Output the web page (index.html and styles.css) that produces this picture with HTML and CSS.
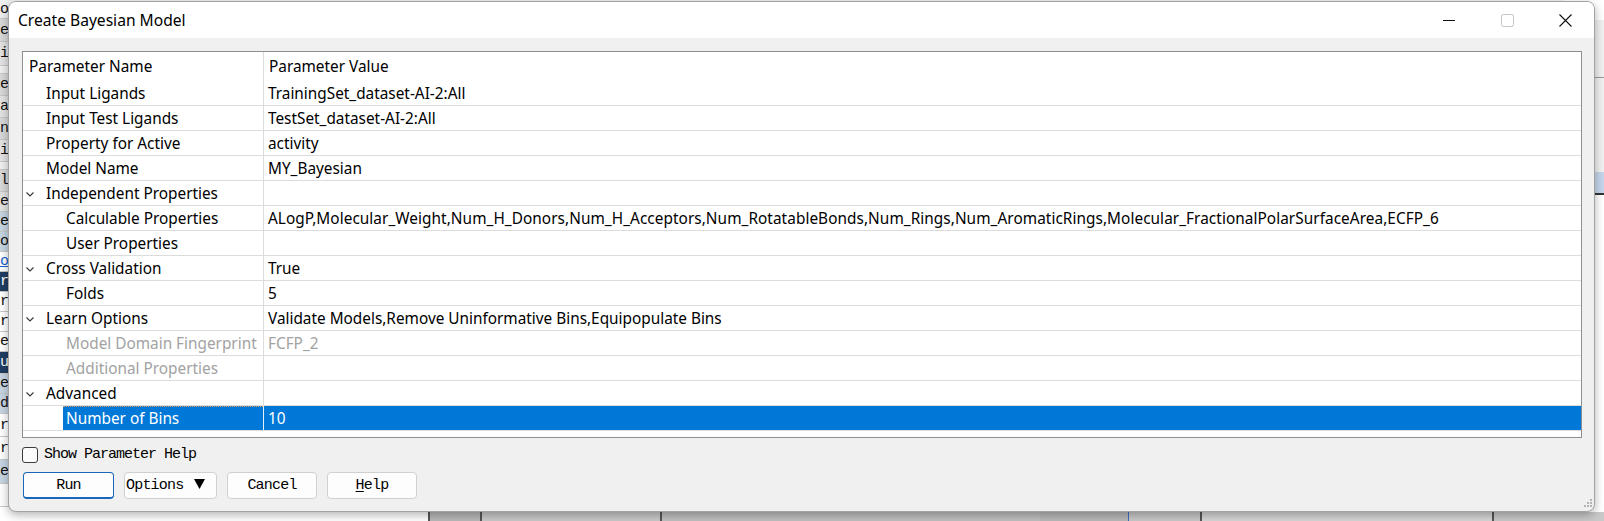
FILE: index.html
```html
<!DOCTYPE html>
<html>
<head>
<meta charset="utf-8">
<title>Create Bayesian Model</title>
<link rel="stylesheet" href="styles.css">
</head>
<body>
<div class="desktop">
  <div class="bg-app">
    <div class="bg-left">
      <div class="bl h19 c-lt">o</div>
      <div class="bl h23 c-g1">et</div>
      <div class="bl h24 c-g2">il</div>
      <div class="bl h8 c-lt"></div>
      <div class="bl h22 c-g1">ep</div>
      <div class="bl h22 c-g2">ar</div>
      <div class="bl h22 c-g1">ni</div>
      <div class="bl h22 c-g2">ig</div>
      <div class="bl h8 c-lt"></div>
      <div class="bl h22 c-g1">lo</div>
      <div class="bl h20 c-g2">ea</div>
      <div class="bl h20 c-lb">e</div>
      <div class="bl h20 c-lb">o</div>
      <div class="bl h20 c-wh link">o</div>
      <div class="bl h20 c-nv">re</div>
      <div class="bl h20 c-wh">r</div>
      <div class="bl h20 c-wh">r</div>
      <div class="bl h20 c-wh">e</div>
      <div class="bl h22 c-nv">ui</div>
      <div class="bl h20 c-lb">e</div>
      <div class="bl h20 c-lb">d</div>
      <div class="bl h23 c-wh">r</div>
      <div class="bl h23 c-wh">r</div>
      <div class="bl h24 c-lb">e</div>
      <div class="bl h23 c-wh"></div>
    </div>
    <div class="bg-mid"></div>
    <div class="bg-right">
      <div class="br h20 c-wh"></div>
      <div class="br h57 c-lt"><span class="br-badge">a</span></div>
      <div class="br h95 c-lt line-top"></div>
      <div class="br h21 c-lb2 br-tab">ys</div>
      <div class="br h40 c-wh line-top2 br-txt">or<br>C</div>
      <div class="br rest c-wh"></div>
    </div>
    <div class="bg-bottom">
      <div class="bb w428 c-wh"></div>
      <div class="bb w52 c-g3 edge-l"></div>
      <div class="bb w180 c-g4 edge-l"></div>
      <div class="bb w380 c-g5 edge-l"></div>
      <div class="bb w88 c-g3"></div>
      <div class="bb w72 c-g4 edge-b"></div>
      <div class="bb w292 c-g6 edge-l"></div>
      <div class="bb grow c-g4 edge-l"></div>
    </div>
  </div>

  <div class="dialog">
    <div class="titlebar">
      <span class="title">Create Bayesian Model</span>
      <div class="caption">
        <span class="cap-btn"><svg width="12" height="12" viewBox="0 0 12 12"><path d="M0 6.5H12" stroke="#111" stroke-width="1"/></svg></span>
        <span class="cap-btn"><svg width="13" height="13" viewBox="0 0 13 13"><rect x="0.5" y="0.5" width="12" height="12" rx="2" fill="none" stroke="#c4c4c4" stroke-width="1"/></svg></span>
        <span class="cap-btn"><svg width="13" height="13" viewBox="0 0 13 13"><path d="M0.5 0.5L12.5 12.5M12.5 0.5L0.5 12.5" stroke="#111" stroke-width="1.1"/></svg></span>
      </div>
    </div>

    <div class="body">
      <div class="grid">
        <div class="row head">
          <div class="name l0">Parameter Name</div>
          <div class="value hv">Parameter Value</div>
        </div>
        <div class="row">
          <div class="name l1">Input Ligands</div>
          <div class="value">TrainingSet_dataset-AI-2:All</div>
        </div>
        <div class="row">
          <div class="name l1">Input Test Ligands</div>
          <div class="value">TestSet_dataset-AI-2:All</div>
        </div>
        <div class="row">
          <div class="name l1">Property for Active</div>
          <div class="value">activity</div>
        </div>
        <div class="row">
          <div class="name l1">Model Name</div>
          <div class="value">MY_Bayesian</div>
        </div>
        <div class="row">
          <div class="name exp"><svg class="chev" width="8" height="5" viewBox="0 0 8 5"><path d="M0.5 0.5L4 4L7.5 0.5" fill="none" stroke="#3a3a3a" stroke-width="1.2"/></svg>Independent Properties</div>
          <div class="value"></div>
        </div>
        <div class="row">
          <div class="name l2">Calculable Properties</div>
          <div class="value long">ALogP,Molecular_Weight,Num_H_Donors,Num_H_Acceptors,Num_RotatableBonds,Num_Rings,Num_AromaticRings,Molecular_FractionalPolarSurfaceArea,ECFP_6</div>
        </div>
        <div class="row">
          <div class="name l2">User Properties</div>
          <div class="value"></div>
        </div>
        <div class="row">
          <div class="name exp"><svg class="chev" width="8" height="5" viewBox="0 0 8 5"><path d="M0.5 0.5L4 4L7.5 0.5" fill="none" stroke="#3a3a3a" stroke-width="1.2"/></svg>Cross Validation</div>
          <div class="value">True</div>
        </div>
        <div class="row">
          <div class="name l2">Folds</div>
          <div class="value">5</div>
        </div>
        <div class="row">
          <div class="name exp"><svg class="chev" width="8" height="5" viewBox="0 0 8 5"><path d="M0.5 0.5L4 4L7.5 0.5" fill="none" stroke="#3a3a3a" stroke-width="1.2"/></svg>Learn Options</div>
          <div class="value">Validate Models,Remove Uninformative Bins,Equipopulate Bins</div>
        </div>
        <div class="row dis">
          <div class="name l2">Model Domain Fingerprint</div>
          <div class="value">FCFP_2</div>
        </div>
        <div class="row dis">
          <div class="name l2">Additional Properties</div>
          <div class="value"></div>
        </div>
        <div class="row">
          <div class="name exp"><svg class="chev" width="8" height="5" viewBox="0 0 8 5"><path d="M0.5 0.5L4 4L7.5 0.5" fill="none" stroke="#3a3a3a" stroke-width="1.2"/></svg>Advanced</div>
          <div class="value"></div>
        </div>
        <div class="row selected">
          <div class="name"><span class="sel">Number of Bins</span></div>
          <div class="value">10</div>
        </div>
      </div>

      <label class="help-check"><span class="box"></span>Show Parameter Help</label>

      <div class="buttons">
        <span class="btn run">Run</span>
        <span class="btn opts">Options<svg class="tri" width="11" height="10" viewBox="0 0 11 10"><path d="M0 0H11L5.5 10Z" fill="#000"/></svg></span>
        <span class="btn cancel">Cancel</span>
        <span class="btn help"><u>H</u>elp</span>
      </div>
    </div>

    <svg class="grip" width="12" height="12" viewBox="0 0 12 12">
      <rect x="9" y="1" width="2" height="2" fill="#b4b4b4"/>
      <rect x="6" y="4" width="2" height="2" fill="#b4b4b4"/>
      <rect x="9" y="4" width="2" height="2" fill="#b4b4b4"/>
      <rect x="3" y="7" width="2" height="2" fill="#b4b4b4"/>
      <rect x="6" y="7" width="2" height="2" fill="#b4b4b4"/>
      <rect x="9" y="7" width="2" height="2" fill="#b4b4b4"/>
    </svg>
  </div>
</div>
</body>
</html>
```

FILE: styles.css
```css
html, body {
  margin: 0;
  padding: 0;
}
body {
  width: 1604px;
  height: 521px;
  overflow: hidden;
  background: #ffffff;
  font-family: "Noto Sans", "Open Sans", sans-serif;
}
.desktop {
  position: relative;
  width: 1604px;
  height: 521px;
  overflow: hidden;
}

/* ---------- background application ---------- */
.bg-app {
  display: grid;
  grid-template-columns: 60px 1fr 40px;
  grid-template-rows: 512px 9px;
  width: 1604px;
  height: 521px;
}
.bg-left {
  display: flex;
  flex-direction: column;
  font-family: "Liberation Mono", monospace;
  font-size: 15px;
  letter-spacing: -1px;
  color: #111;
  overflow: hidden;
}
.bl {
  display: flex;
  align-items: center;
  box-sizing: border-box;
  border-bottom: 1px solid #c8c8c8;
  white-space: nowrap;
}
.bg-mid { background: #f0f0f0; }
.bg-right {
  display: flex;
  flex-direction: column;
  overflow: hidden;
  font-family: "Liberation Sans", sans-serif;
  font-size: 14px;
}
.br { box-sizing: border-box; }
.br-badge {
  display: inline-block;
  margin: 24px 0 0 1px;
  background: #1a6fc0;
  color: #fff;
  font-weight: bold;
  padding: 0 2px;
  line-height: 14px;
}
.br-tab { color: #1f4f8f; font-weight: bold; font-size: 13px; font-style: italic; padding-top: 3px; }
.br-txt { line-height: 14px; padding-top: 3px; color: #111; }
.line-top { border-top: 1px solid #9a9a9a; }
.line-top2 { border-top: 2px solid #333; }
.rest { flex: 1; }

.h8 { height: 8px; }
.h19 { height: 19px; }
.h20 { height: 20px; }
.h21 { height: 21px; }
.h22 { height: 22px; }
.h23 { height: 23px; }
.h24 { height: 24px; }
.h40 { height: 40px; }
.h57 { height: 57px; }
.h95 { height: 95px; }

.c-lt { background: #f0f0f0; }
.c-g1 { background: #d9d9d9; }
.c-g2 { background: #e3e3e3; }
.c-g3 { background: #b9b9b9; }
.c-g4 { background: #c9c9c9; }
.c-g5 { background: #bfbfbf; }
.c-g6 { background: #d6d6d6; }
.c-lb { background: #c7d6e4; }
.c-lb2 { background: #c4d5ea; }
.c-nv { background: #203d63; color: #fff; }
.c-wh { background: #ffffff; }
.link { color: #1a5fd0; text-decoration: underline; }

.bg-bottom {
  grid-column: 1 / 4;
  display: flex;
  overflow: hidden;
}
.bb { box-sizing: border-box; }
.w428 { width: 428px; }
.w52 { width: 52px; }
.w180 { width: 180px; }
.w380 { width: 380px; }
.w88 { width: 88px; }
.w72 { width: 72px; }
.w292 { width: 292px; }
.grow { flex: 1; }
.edge-l { border-left: 2px solid #555; }
.edge-b { border-left: 1px solid #3a6fc0; }

/* ---------- dialog window ---------- */
.dialog {
  position: absolute;
  left: 8px;
  top: 1px;
  width: 1587px;
  height: 511px;
  box-sizing: border-box;
  border: 1px solid #a3a3a3;
  border-radius: 8px;
  background: #f0f0f0;
  overflow: hidden;
  display: flex;
  flex-direction: column;
  box-shadow: 0 3px 10px rgba(0, 0, 0, 0.3);
  color: #000;
}
.titlebar {
  height: 36px;
  flex: none;
  display: flex;
  align-items: center;
  background: #ffffff;
}
.title {
  flex: 1;
  padding-left: 9px;
  font-size: 15.6px;
  line-height: 36px;
}
.caption {
  display: flex;
  height: 36px;
}
.cap-btn {
  width: 58px;
  height: 36px;
  display: flex;
  align-items: center;
  justify-content: center;
}

.body {
  flex: 1;
  display: flex;
  flex-direction: column;
  padding: 13px 12px 0 13px;
}

/* ---------- property grid ---------- */
.grid {
  height: 387px;
  box-sizing: border-box;
  border: 1px solid #8d8f94;
  background: #ffffff;
  font-size: 15.35px;
  overflow: hidden;
}
.row {
  display: flex;
  height: 25px;
  box-sizing: border-box;
  border-bottom: 1px solid #dcdcdc;
  line-height: 24px;
  white-space: nowrap;
}
.row.head {
  height: 29px;
  line-height: 29px;
  border-bottom: none;
}
.name {
  width: 241px;
  flex: none;
  box-sizing: border-box;
  border-right: 1px solid #dcdcdc;
  display: flex;
  align-items: center;
  overflow: hidden;
}
.value {
  flex: 1;
  padding-left: 4px;
  overflow: hidden;
}
.value.long { letter-spacing: 0.06px; }
.value.hv { padding-left: 5px; }
.l0 { padding-left: 6px; }
.l1 { padding-left: 23px; }
.l2 { padding-left: 43px; }
.exp { padding-left: 3px; }
.chev {
  flex: none;
  margin-right: 12px;
  margin-top: 2px;
}
.dis { color: #a2a2a2; }

.selected .name { border-right-color: #e6eef8; }
.sel {
  position: relative;
  align-self: stretch;
  flex: 1;
  margin-left: 40px;
  padding-left: 3px;
  background: #0078d7;
  color: #ffffff;
}
.sel::before {
  content: "";
  position: absolute;
  left: 0;
  right: 0;
  top: 0;
  border-top: 1px dotted #e0a060;
}
.selected .value {
  background: #0078d7;
  color: #ffffff;
}

/* ---------- bottom controls ---------- */
.help-check {
  display: flex;
  align-items: center;
  margin-top: 9px;
  height: 16px;
  font-family: "Liberation Mono", monospace;
  font-size: 15px;
  letter-spacing: -1px;
  line-height: 16px;
}
.box {
  width: 16px;
  height: 16px;
  box-sizing: border-box;
  border: 1px solid #3c3c3c;
  border-radius: 3px;
  background: #fbfbfb;
  margin-right: 6px;
}
.buttons {
  display: flex;
  gap: 10px;
  margin-top: 9px;
  margin-left: 1px;
}
.btn {
  height: 27px;
  box-sizing: border-box;
  border: 1px solid #d0d0d0;
  border-radius: 4px;
  background: #fdfdfd;
  display: flex;
  align-items: center;
  justify-content: center;
  font-family: "Liberation Mono", monospace;
  font-size: 15px;
  letter-spacing: -0.8px;
  line-height: 17px;
  white-space: nowrap;
}
.run { width: 91px; border-color: #1a66b8; border-bottom-width: 2px; padding-top: 1px; }
.opts { width: 93px; justify-content: flex-start; padding-left: 1px; }
.cancel { width: 90px; }
.help { width: 90px; }
.tri { flex: none; margin-left: 11px; margin-top: -3px; }
.help u { text-decoration-thickness: 1px; text-underline-offset: 2px; }

.grip {
  position: absolute;
  right: 1px;
  bottom: 1px;
}
```
